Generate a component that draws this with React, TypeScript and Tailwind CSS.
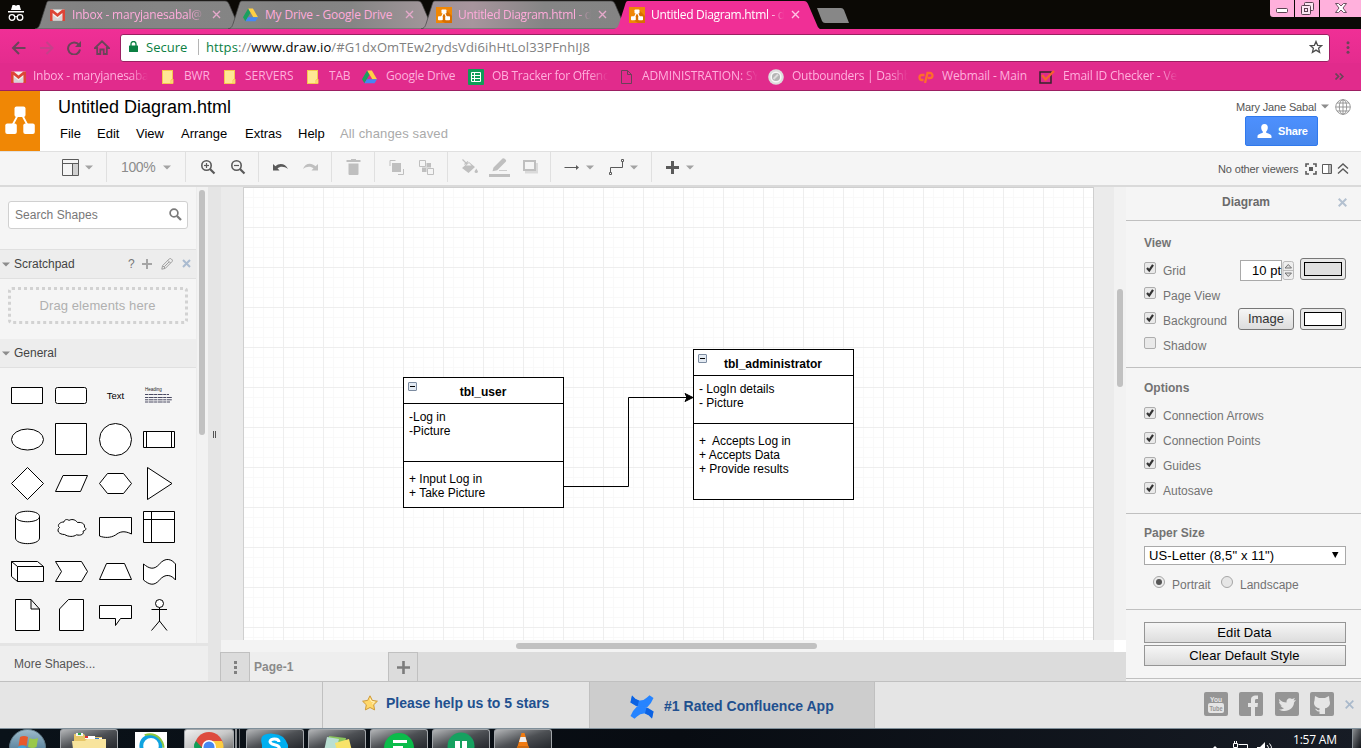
import React from "react";

const UI = "font-['Open_Sans','Noto_Sans',sans-serif]";

/* ---------- shared bits ---------- */

const Caret = ({ className = "" }: { className?: string }) => (
  <svg className={"shrink-0 " + className} width="9" height="5" viewBox="0 0 9 5">
    <path d="M0 0.500h8L4 4.500z" fill="currentColor" />
  </svg>
);

const Gmail = () => (
  <svg width="15" height="12" viewBox="0 0 15 12" className="shrink-0">
    <rect x="0.5" y="0.5" width="14" height="11" fill="#f2f2f2" />
    <path d="M3 11.5V6l4.5 3.4L12 6v5.500z" fill="#d8d4d6" />
    <path d="M0 0.500h2.600L7.500 4.600 12.400 0.500H15V12h-2.600V4L7.500 8 2.600 4v8H0z" fill="#dd4437" />
  </svg>
);

const Drive = () => (
  <svg width="15" height="14" viewBox="0 0 15 14" className="shrink-0">
    <path d="M5.200 0.500 0 9.300l2.400 4L7.600 4.500z" fill="#19a15f" />
    <path d="M5.200 0.500h4.700l5.100 8.800h-4.700z" fill="#ffcf44" />
    <path d="M2.400 13.300 5 9.300h10l-2.500 4z" fill="#4587f4" />
  </svg>
);

const DrawLogo = () => (
  <svg width="16" height="16" viewBox="0 0 16 16" className="shrink-0">
    <rect width="16" height="16" fill="#f08705" />
    <path d="M10 3l6 6v7H9l-5-3z" fill="#d86f00" />
    <path d="M8 5 5 11M8 5l3 6" stroke="#fff" strokeWidth="1.200" />
    <rect x="5.500" y="2.500" width="5" height="4" rx="0.800" fill="#fff" />
    <rect x="2" y="9.200" width="4.800" height="4" rx="0.800" fill="#fff" />
    <rect x="9.200" y="9.200" width="4.800" height="4" rx="0.800" fill="#fff" />
  </svg>
);

const FolderIcon = () => (
  <svg width="13" height="14" viewBox="0 0 13 14" className="shrink-0">
    <rect x="0.500" y="0.500" width="10" height="13" fill="#ffe694" stroke="#f5c84e" />
    <path d="M11 9v4.500H9V10z" fill="#ffe694" stroke="#f5c84e" />
  </svg>
);

/* ---------- browser window ---------- */

const fade = "[mask-image:linear-gradient(to_right,#000_84%,transparent)]";

function Tab({ icon, text, active = false, blur = "", textClass }: { icon: React.ReactNode; text: string; active?: boolean; blur?: string; textClass: string }) {
  return (
    <div className={"relative -ml-[13px] h-[29px] w-[206px] shrink-0 " + (active ? "z-10" : "")}>
      <svg className="absolute inset-0" width="206" height="29" viewBox="0 0 206 29">
        <defs>
          <linearGradient id={"tabfill" + blur}>
            <stop offset="0" stopColor={blur === "b" ? "#9b9195" : "#868686"} />
            <stop offset="0.250" stopColor={blur === "b" ? "#a7959d" : "#828282"} />
            <stop offset="0.600" stopColor="#858585" />
            <stop offset="1" stopColor={blur === "a" ? "#a3979b" : "#848484"} />
          </linearGradient>
        </defs>
        <path
          d="M0 29C4 28 4 26 5 24L11 5C12 2 12 1 14 1H190C192 1 193 2 194 4L203 25C204 28 205 28 206 29Z"
          fill={active ? "#f02f96" : `url(#tabfill${blur})`}
          stroke={active ? "none" : "#444"}
          strokeWidth="0.700"
        />
      </svg>
      <div className="relative flex h-full items-center pl-[15px]">
        <div className="flex w-[22px]">{icon}</div>
        <div className={"w-[133px] overflow-hidden text-[12px] leading-[16px] whitespace-nowrap " + textClass}>{text}</div>
        <svg className="ml-[7px]" width="9" height="9" viewBox="0 0 9 9">
          <path d="M1 1l7 7M8 1L1 8" stroke={active ? "#ffc4e4" : "#e5a9cb"} strokeWidth="1.400" />
        </svg>
      </div>
    </div>
  );
}

function TabStrip() {
  return (
    <div className="flex h-[29px] bg-[#0b0905]">
      <div className="flex w-[48px] shrink-0 pt-[5px] pl-[8px]">
        <svg width="16" height="17" viewBox="0 0 16 17" fill="none">
          <path d="M4.500 0h2l1.500.7L9.500 0h2l1.500 5H3zM0 6h16v1.500H0z" fill="#fff" />
          <circle cx="4" cy="12.500" r="2.800" stroke="#fff" strokeWidth="1.300" />
          <circle cx="12" cy="12.500" r="2.800" stroke="#fff" strokeWidth="1.300" />
          <path d="M6.500 12q1.500-1 3 0" stroke="#fff" />
        </svg>
      </div>
      <Tab icon={<Gmail />} text="Inbox - maryjanesabal@" blur="n" textClass="text-[#ffabdb] tracking-[-0.2px] [mask-image:linear-gradient(to_right,#000_88%,transparent)]" />
      <Tab icon={<Drive />} text="My Drive - Google Drive" blur="a" textClass="text-[#ffabdb] tracking-[-0.18px]" />
      <Tab icon={<DrawLogo />} text="Untitled Diagram.html - d" blur="b" textClass="text-[#ffabdb] tracking-[-0.32px] [mask-image:linear-gradient(to_right,#000_88%,transparent)]" />
      <Tab icon={<DrawLogo />} text="Untitled Diagram.html - d" active textClass="text-white tracking-[-0.32px] [mask-image:linear-gradient(to_right,#000_88%,transparent)]" />
      <svg className="mt-[8px] -ml-[3px]" width="33" height="15" viewBox="0 0 33 15">
        <path d="M0 0H24Q26 0 27 2L32 15H8Q6 15 5 13Z" fill="#878787" />
      </svg>
      <div className="ml-auto flex h-[17px] gap-px">
        <div className="flex w-[24px] justify-center rounded-bl-[3px] bg-[#ffb0dc] pt-[8px]">
          <svg width="12" height="5" viewBox="0 0 12 5"><rect x="0.500" y="0.500" width="11" height="4" rx="1" fill="#fff" stroke="#5b4352" /></svg>
        </div>
        <div className="flex w-[24px] justify-center bg-[#ffb0dc] pt-[2px]">
          <svg width="13" height="13" viewBox="0 0 13 13" fill="#fbe6f2" stroke="#5b4352">
            <rect x="3.500" y="0.500" width="9" height="8" rx="1" />
            <rect x="0.500" y="3.500" width="9" height="9" rx="1" />
            <rect x="3.500" y="6.500" width="3" height="3" />
          </svg>
        </div>
        <div className="flex w-[41px] justify-center bg-[#ffb0dc] pt-[3px]">
          <svg width="12" height="10" viewBox="0 0 12 10">
            <path d="M.5.5h3L6 3 8.500.5h3L8 5l3.500 4.500h-3L6 7 3.500 9.500h-3L4 5z" fill="#fff" stroke="#5b4352" strokeWidth="0.900" />
          </svg>
        </div>
      </div>
    </div>
  );
}

function AddressBar() {
  return (
    <div className="flex h-[34px] items-center bg-linear-to-b from-[#f02f96] to-[#e42c8e] pt-[3px]">
      <svg className="ml-[11px] shrink-0" width="15" height="14" viewBox="0 0 15 14" fill="none" stroke="#6b4459" strokeWidth="2">
        <path d="M14.500 7H2M8 1 2 7l6 6" />
      </svg>
      <svg className="ml-[14px] shrink-0" width="14" height="14" viewBox="0 0 14 14" fill="none" stroke="#c5408a" strokeWidth="2">
        <path d="M0 7h12M6.500 1l6 6-6 6" />
      </svg>
      <svg className="ml-[13px] shrink-0" width="14" height="14" viewBox="0 0 14 14" fill="none" stroke="#6b4459" strokeWidth="2">
        <path d="M12 4A6 6 0 1 0 13 8.500" /><path d="M14 0v6H8z" fill="#6b4459" stroke="none" />
      </svg>
      <svg className="ml-[13px] shrink-0" width="16" height="15" viewBox="0 0 16 15" fill="none" stroke="#6b4459" strokeWidth="1.800">
        <path d="M1 8 8 1.300 15 8h-2.200v6H9.700V9.500H6.300V14H3.200V8z" />
      </svg>
      <div className="ml-[10px] flex h-[28px] w-[1210px] shrink-0 items-center rounded-[3px] border border-[#9c1f62] bg-white pb-[2px]">
        <svg className="ml-[8px]" width="9" height="11" viewBox="0 0 9 11">
          <rect x="0" y="4.500" width="9" height="6.500" rx="0.500" fill="#0b8043" />
          <path d="M2 5V3a2.500 2.500 0 0 1 5 0v2" fill="none" stroke="#0b8043" strokeWidth="1.300" />
        </svg>
        <span className="ml-[8px] w-[42px] text-[13px] leading-[18px] text-[#0b8043]">Secure</span>
        <span className="ml-[10px] h-[16px] w-px bg-[#b5b5b5]" />
        <span className="ml-[7px] text-[13px] leading-[18px] tracking-[0.12px] whitespace-nowrap text-[#808080]">
          <span className="text-[#0b8043]">https</span>://<span className="text-black">www.draw.io</span>/#G1dxOmTEw2rydsVdi6ihHtLol33PFnhIJ8
        </span>
        <svg className="mr-[6px] ml-auto" width="14" height="14" viewBox="0 0 14 14" fill="none" stroke="#4d4d4d" strokeWidth="1.300">
          <path d="M7 1.500l1.600 3.800 4.100.3-3.100 2.700 1 4L7 10.100l-3.600 2.200 1-4L1.300 5.600l4.100-.3z" />
        </svg>
      </div>
      <svg className="ml-[16px]" width="4" height="13" viewBox="0 0 4 13" fill="#6b4459">
        <circle cx="2" cy="1.700" r="1.500" /><circle cx="2" cy="6.500" r="1.500" /><circle cx="2" cy="11.300" r="1.500" />
      </svg>
    </div>
  );
}

const bookmarks: { w: string; iw: string; tw: string; text: string; icon: React.ReactNode; faded?: boolean }[] = [
  { w: "w-[151px]", iw: "w-[22px]", tw: "w-[115px] tracking-[-0.25px]", text: "Inbox - maryjanesaba", icon: <Gmail />, faded: true },
  { w: "w-[62px]", iw: "w-[22px]", tw: "tracking-[-0.2px]", text: "BWR", icon: <FolderIcon /> },
  { w: "w-[83px]", iw: "w-[21px]", tw: "", text: "SERVERS", icon: <FolderIcon /> },
  { w: "w-[55px]", iw: "w-[22px]", tw: "tracking-[-0.2px]", text: "TAB", icon: <FolderIcon /> },
  { w: "w-[106px]", iw: "w-[24px]", tw: "tracking-[-0.22px]", text: "Google Drive", icon: <Drive /> },
  {
    w: "w-[153px]", iw: "w-[24px]", tw: "w-[116px] tracking-[-0.25px]", text: "OB Tracker for Offenc", faded: true,
    icon: (
      <svg width="16" height="16" viewBox="0 0 16 16"><rect width="16" height="16" rx="1" fill="#0f9d58" /><path d="M3.500 3.500h9v9h-9zM3.500 6.500h9M3.500 9.500h9M6.500 3.500v9" fill="none" stroke="#fff" /></svg>
    ),
  },
  {
    w: "w-[147px]", iw: "w-[21px]", tw: "w-[116px] tracking-[-0.1px]", text: "ADMINISTRATION: SY", faded: true,
    icon: (
      <svg width="11" height="14" viewBox="0 0 11 14"><path d="M.5.500h6l4 4v9H.5zM6.500.5v4h4" fill="none" stroke="#6b4058" /></svg>
    ),
  },
  {
    w: "w-[150px]", iw: "w-[24px]", tw: "w-[116px] tracking-[-0.25px]", text: "Outbounders | Dashb", faded: true,
    icon: (
      <svg width="16" height="16" viewBox="0 0 16 16"><circle cx="8" cy="8" r="7.800" fill="#ddd" /><circle cx="8" cy="8" r="4.800" fill="#b5b5b5" stroke="#f8f8f8" strokeWidth="1.500" /><path d="M5.500 10 10 5.500" stroke="#ddd" strokeWidth="2" /></svg>
    ),
  },
  {
    w: "w-[121px]", iw: "w-[24px]", tw: "tracking-[-0.15px]", text: "Webmail - Main",
    icon: (
      <svg width="16" height="12" viewBox="0 0 16 12" fill="none" stroke="#ff6c2c" strokeWidth="2.300"><path d="M6.500 4H4a2.500 2.500 0 0 0 0 5h1.500M7 12 9.500 2H12a2.500 2.500 0 0 1 0 5H9.800" /></svg>
    ),
  },
  {
    w: "w-[150px]", iw: "w-[24px]", tw: "w-[115px] tracking-[-0.2px]", text: "Email ID Checker - Ve", faded: true,
    icon: (
      <svg width="16" height="14" viewBox="0 0 16 14" fill="none"><path d="M1 2h11v11H1z" stroke="#35252b" strokeWidth="1.500" /><path d="M3 5l3.500 4.500L15 1" stroke="#f4622e" strokeWidth="2.400" /></svg>
    ),
  },
];

function BookmarksBar() {
  return (
    <div className="flex h-[28px] items-center border-b border-[#9c1f62] bg-[#e12b8c] pl-[11px]">
      {bookmarks.map((b) => (
        <div key={b.text} className={"flex shrink-0 items-center " + b.w}>
          <div className={"flex shrink-0 " + b.iw}>{b.icon}</div>
          <div className={"-mt-[2px] overflow-hidden text-[12px] leading-[16px] whitespace-nowrap text-[#ffb0dd] " + b.tw + " " + (b.faded ? fade : "")}>{b.text}</div>
        </div>
      ))}
      <svg className="mr-[17px] ml-auto" width="9" height="7" viewBox="0 0 9 7" fill="none" stroke="#6b4459" strokeWidth="1.700">
        <path d="M.5.5l3 3-3 3M4.800.5l3 3-3 3" />
      </svg>
    </div>
  );
}

/* ---------- editor header ---------- */

function Header() {
  return (
    <div className="flex h-[61px] border-b border-[#e0e0e0] bg-white">
      <div className="h-[60px] w-[40px] shrink-0 bg-[#f08705]">
        <svg width="40" height="60" viewBox="0 0 40 60">
          <path d="M20 20 11.500 36M20 20l8.500 16" stroke="#fff" strokeWidth="1.800" />
          <rect x="14.500" y="15.500" width="11" height="10.500" rx="2" fill="#fff" />
          <rect x="5.300" y="32.500" width="11.500" height="10.500" rx="2" fill="#fff" />
          <rect x="23.300" y="32.500" width="11.500" height="10.500" rx="2" fill="#fff" />
        </svg>
      </div>
      <div className="pl-[18px]">
        <div className="pt-[5px] text-[18px] leading-[22px] whitespace-nowrap text-black">Untitled Diagram.html</div>
        <div className="flex pt-[8px] pl-[2px] text-[13px] leading-[16px] whitespace-nowrap text-black">
          <span className="w-[37px]">File</span>
          <span className="w-[39px]">Edit</span>
          <span className="w-[45px]">View</span>
          <span className="w-[64px]">Arrange</span>
          <span className="w-[53px]">Extras</span>
          <span className="w-[42px]">Help</span>
          <span className="tracking-[0.15px] text-[#aaa]">All changes saved</span>
        </div>
      </div>
      <div className="ml-auto flex flex-col">
        <div className="mt-[7px] mr-[10px] flex h-[17px] items-center text-[11px] text-[#555]">
          <span className="w-[85px] pt-[2px] tracking-[-0.15px] whitespace-nowrap">Mary Jane Sabal</span>
          <Caret className="text-[#8c8c8c]" />
          <svg className="ml-[5px]" width="16" height="16" viewBox="0 0 16 16" fill="none" stroke="#8f8f8f" strokeWidth="0.900">
            <circle cx="8" cy="8" r="7.300" /><ellipse cx="8" cy="8" rx="3.700" ry="7.300" /><path d="M8 .7v14.600M.7 8h14.600M2 4h12M2 12h12" />
          </svg>
        </div>
        <div className="mt-[1px] ml-[9px] flex h-[30px] w-[73px] items-center rounded-[2px] border border-[#3079ed] bg-linear-to-b from-[#4d90fe] to-[#4787ed] pl-[11px]">
          <svg width="15" height="14" viewBox="0 0 15 14" fill="#fff">
            <path d="M7.500 0C10 0 11 1.800 10.800 4 10.600 6 9.800 7 9.200 7.600v1.200c1.500.8 4.800 1.300 5.300 3.200V14H.5v-2c.5-1.900 3.800-2.400 5.300-3.200V7.600C5.200 7 4.400 6 4.200 4 4 1.800 5 0 7.500 0z" />
          </svg>
          <span className="ml-[6px] text-[11px] font-bold tracking-[-0.15px] text-white">Share</span>
        </div>
      </div>
    </div>
  );
}

function Group({ className, children }: { className: string; children: React.ReactNode }) {
  return <div className={"flex h-full shrink-0 items-center border-r border-[#e0e0e0] " + className}>{children}</div>;
}

const DARK = "#5a5a5a";
const PALE = "#bfbfbf";

function Toolbar() {
  return (
    <div className="flex h-[35px] items-stretch border-b-2 border-[#dadada] bg-[#f5f5f5] pb-[3px]">
      <Group className="w-[107px] pl-[62px]">
        <svg width="17" height="17" viewBox="0 0 17 17"><path d="M11 5h5v11h-5z" fill="#d0d0d0" /><path d="M.500.500h16v16H.500zM.5 4.500h16M10.500 4.500v12" fill="none" stroke={DARK} /></svg>
        <Caret className="ml-[6px] text-[#a3a3a3]" />
      </Group>
      <Group className="w-[79px] pl-[14px]">
        <span className="w-[42px] pb-px text-[14px] leading-[16px] tracking-[-0.4px] text-[#8c8c8c]">100%</span>
        <Caret className="text-[#a3a3a3]" />
      </Group>
      <Group className="w-[73px] pl-[14px]">
        {[true, false].map((plus) => (
          <svg key={String(plus)} className="mr-[14px] shrink-0" width="16" height="16" viewBox="0 0 16 16" fill="none" stroke={DARK} strokeWidth="1.600">
            <circle cx="6.500" cy="6.500" r="4.700" /><path d="M10 10l4.500 4.500" strokeWidth="2.200" /><path d="M4 6.500h5" strokeWidth="1.200" />
            {plus && <path d="M6.500 4v5" strokeWidth="1.200" />}
          </svg>
        ))}
      </Group>
      <Group className="w-[73px] pl-[14px]">
        <svg width="15" height="8" viewBox="0 0 15 8" fill={DARK}><path d="M0 1v6.500h6.500L4.500 5.300C7 3 11.500 3 15 6 13 1 6.500-.8 2.500 3.200z" /></svg>
        <svg className="ml-[15px]" width="15" height="8" viewBox="0 0 15 8" fill={PALE}><path d="M15 1v6.500H8.500l2-2.200C8 3 3.500 3 0 6 2-.1 8.500-.8 12.500 3.200z" /></svg>
      </Group>
      <Group className="w-[43px] pl-[14px]">
        <svg width="15" height="16" viewBox="0 0 15 16" fill={PALE}><path d="M5 0h5v1h4.500v2H.5V1H5zM2.500 4.500h10V15a1 1 0 0 1-1 1h-8a1 1 0 0 1-1-1z" /></svg>
      </Group>
      <Group className="w-[73px] pl-[14px]">
        <svg width="15" height="15" viewBox="0 0 15 15" fill="none" stroke={PALE}><path d="M3 3h9v9H3z" fill={PALE} stroke="none" /><path d="M1 6V.5h5.500M9 14.500h5.500V9" /></svg>
        <svg className="ml-[15px]" width="15" height="15" viewBox="0 0 15 15" fill="none" stroke={PALE}><path d="M7.500 3H12v4.500H7.500zM3 7.500h4.500V12H3z" fill={PALE} stroke="none" /><path d="M.5.500h6v6h-6zM8.500 8.500h6v6h-6z" /></svg>
      </Group>
      <Group className="w-[103px] pl-[13px]">
        <svg width="17" height="16" viewBox="0 0 17 16" fill={PALE}><path d="M1 9l7-6 6 5-6.500 6zM13.500 13a2 2 0 0 0 3.500 0c0-1-1.700-3.500-1.700-3.500S13.500 12 13.500 13z" /><path d="M1.500.5l8 8M3.500 5.500 7 2.500" stroke={PALE} strokeWidth="1.200" /><path d="M5 6.500l3-2.500 2.500 2.500z" fill="#f5f5f5" /></svg>
        <svg className="ml-[11px]" width="22" height="19" viewBox="0 0 22 19" fill={PALE}><path d="M4.500 9.500l9-9q1-.8 2.200.2l1 1q.9 1 0 2l-8.500 8.500-4.700 1zM10 12h8v.700h-8zM0 16h21v3H0z" /></svg>
        <svg className="ml-[12px]" width="16" height="14" viewBox="0 0 16 14"><path d="M2 3h13v10.500H2z" fill="#dadada" /><path d="M1 1h11v9H1z" fill="#f5f5f5" stroke={PALE} strokeWidth="2" /></svg>
      </Group>
      <Group className="w-[101px] pl-[13px]">
        <svg width="16" height="7" viewBox="0 0 16 7"><path d="M.5 3.500H14" stroke={DARK} /><path d="M12 1l3 2.500-3 2.500z" fill={DARK} /></svg>
        <Caret className="ml-[6px] text-[#a3a3a3]" />
        <svg className="ml-[13px]" width="16" height="16" viewBox="0 0 16 16" fill="none" stroke={DARK}><path d="M2.500 13V8.500h12V3" /><path d="M1.500 13.500h2v2h-2zM13.500.500h2v2h-2z" fill="#fff" /></svg>
        <Caret className="ml-[6px] text-[#a3a3a3]" />
      </Group>
      <div className="flex items-center pl-[14px]">
        <svg width="13" height="13" viewBox="0 0 13 13"><path d="M6.500 0v13M0 6.500h13" stroke={DARK} strokeWidth="3" /></svg>
        <Caret className="ml-[7px] text-[#a3a3a3]" />
      </div>
      <div className="mr-[12px] ml-auto flex items-center pt-[3px] text-[11px] text-[#555]">
        <span className="w-[87px] pt-[2px] tracking-[-0.14px] whitespace-nowrap">No other viewers</span>
        <svg width="12" height="12" viewBox="0 0 12 12" fill="none" stroke={DARK} strokeWidth="1.600"><path d="M1 4V1h3M8 1h3v3M11 8v3H8M4 11H1V8" /><path d="M4 4h4v4H4z" fill={DARK} stroke="none" /></svg>
        <svg className="ml-[5px]" width="10" height="10" viewBox="0 0 10 10"><path d="M.5.500h9v9h-9z" fill="#fff" stroke={DARK} /><path d="M6 1h3v8H6z" fill="#b8b8b8" /><path d="M6.500 1v8" stroke="#888" /></svg>
        <svg className="ml-[5px]" width="12" height="11" viewBox="0 0 12 11" fill="none" stroke={DARK} strokeWidth="1.400"><path d="M1 5.500l5-4.500 5 4.500M1 10.500 6 6l5 4.500" /></svg>
      </div>
    </div>
  );
}

/* ---------- shape sidebar ---------- */

const shapes: React.ReactNode[] = [
  <path d="M6.500 14.500h31v16h-31z" />,
  <rect x="6.500" y="14.500" width="31" height="16" rx="2" />,
  <text x="22.500" y="26" textAnchor="middle" fontSize="9.500" fill="#000" stroke="none">Text</text>,
  <g stroke="none" fill="#222"><text x="8" y="18" fontSize="4.500">Heading</text><path d="M8 21.500h24M8 24.500h27M8 26.800h27M8 29h25" stroke="#4a4a62" strokeWidth="1" strokeDasharray="3 .6 5 .5" /></g>,
  <ellipse cx="22.500" cy="22.500" rx="16" ry="10.500" />,
  <path d="M6.500 6.500h31v31h-31z" />,
  <circle cx="22.500" cy="22.500" r="16" />,
  <path d="M6.500 14.500h31v16h-31zM9.500 14.500v16M34.500 14.500v16" />,
  <path d="M22.500 6.500l16 16-16 16-16-16z" />,
  <path d="M14 14.500h24.500l-7 16h-25z" />,
  <path d="M14.500 12.500h16l8 10-8 10h-16l-8-10z" />,
  <path d="M10.500 6.500l24.500 16-24.500 16z" />,
  <path d="M10.500 11.500v21.500c0 7.500 24 7.500 24 0V11.500c0-7-24-7-24 0c0 7 24 7 24 0" />,
  <path d="M15 17C10 17 8 21 10.500 22.500 7 25.500 10 29.500 15.500 29.500c4 2.500 9 2.500 12 .3 4 1.200 8-.8 6.500-3.600 3.500-1 3.500-3 1.500-4 .5-3.700-3-5.200-7-4.700C26 14 22 14 20 15.500 18 13.500 15 15 15 17z" />,
  <path d="M6.500 12.500h32V29c-8-4-12-2-16 1-5 3-11 3-16 1z" />,
  <path d="M6.500 6.500h31v31h-31zM6.500 14.500h31M14.500 6.500v31" />,
  <path d="M6.500 12.500h26l6 5v15h-26l-6-5zl6 5v15M12.500 17.500h26" />,
  <path d="M6.500 12.500h26l6 10-6 10h-26l6-10z" />,
  <path d="M13.500 14.500h18l7 16h-32z" />,
  <path d="M6.500 15c5 4 10 7 16 0 6-7 12-5 16 0v16c-4-5-10-7-16 0-6 7-11 4-16 0z" />,
  <path d="M10.500 6.500h15.500l8.500 9.500v21.500h-24zM26 6.500v9.500h8.500" />,
  <path d="M19.500 6.500h15v31h-24V16z" />,
  <path d="M6.500 12.500h32v13H27.500l-5 7v-7h-16z" />,
  <g><circle cx="22.500" cy="10.500" r="4" /><path d="M22.500 14.500v14M14.500 16.500h15.500M22.500 28l-8 9.500M22.500 28l7.500 9.500" /></g>,
];

function Sidebar() {
  return (
    <div className="flex w-[208px] shrink-0 flex-col bg-[#f5f5f5]">
      <div className="flex h-[459px] shrink-0 border-b-[3px] border-[#e4e4e4]">
        <div className="w-[196px] shrink-0 text-[12px] text-[#444]">
          <div className="mt-[14px] ml-[8px] flex h-[28px] w-[180px] items-center justify-between rounded-[3px] border border-[#d0d0d0] bg-white pr-[5px] pl-[6px]">
            <span className="tracking-[0.05px] text-[#777]">Search Shapes</span>
            <svg className="-mt-[2px]" width="13" height="13" viewBox="0 0 13 13" fill="none" stroke="#7a7a7a" strokeWidth="1.700"><circle cx="5" cy="5" r="3.900" /><path d="M8 8l4 4" strokeWidth="2.300" /></svg>
          </div>
          <div className="mt-[20px] flex h-[30px] items-center border-y border-[#e0e0e0] bg-[#ededed] pl-[2px]">
            <Caret className="text-[#8c8c8c]" />
            <span className="ml-[3px]">Scratchpad</span>
            <div className="mr-[5px] ml-auto flex items-center text-[#777]">
              <span className="w-[14px]">?</span>
              <svg width="10" height="10" viewBox="0 0 10 10"><path d="M5 0v10M0 5h10" stroke="#a5a5a5" strokeWidth="2" /></svg>
              <svg className="ml-[9px]" width="12" height="12" viewBox="0 0 12 12" fill="none" stroke="#949494" strokeWidth="0.900"><path d="M.8 11.200l.8-3.600L8.500.7q1-.5 1.800.3l.8.800q.7.900 0 1.700L4.300 10.400zM2 8l2 2M7 2.500 9.500 5M3.200 8.800 8 4" /></svg>
              <svg className="-mt-px ml-[9px]" width="9" height="9" viewBox="0 0 9 9"><path d="M1 1l7 7M8 1L1 8" stroke="#aabbd0" strokeWidth="2" /></svg>
            </div>
          </div>
          <div className="mt-[8px] ml-[8px] flex h-[37px] w-[180px] items-center justify-center rounded-[4px] border-[3px] border-dotted border-[#d2d2d2] pr-px text-[13px] tracking-[0.1px] text-[#b0b0b0]">
            Drag elements here
          </div>
          <div className="mt-[15px] flex h-[29px] items-center border-b border-[#e0e0e0] bg-[#ededed] pl-[2px]">
            <Caret className="text-[#8c8c8c]" />
            <span className="ml-[3px]">General</span>
          </div>
          <div className="grid grid-cols-[repeat(4,44px)] pt-[5px] pl-[5px]">
            {shapes.map((s, i) => (
              <svg key={i} width="44" height="44" viewBox="0 0 44 44" fill="#fff" stroke="#000" strokeWidth="1">{s}</svg>
            ))}
          </div>
        </div>
        <div className="w-[12px] border-l border-[#ececec] bg-[#f2f2f2] pt-[3px] pl-[2px]">
          <div className="h-[245px] w-[6px] rounded-full bg-[#c1c1c1]" />
        </div>
      </div>
      <div className="flex flex-1 items-center bg-[#eee] pl-[14px] text-[12px] text-[#555]">More Shapes...</div>
    </div>
  );
}

/* ---------- canvas ---------- */

const Fold = () => (
  <svg className="absolute top-[4px] left-[4px]" width="9" height="9" viewBox="0 0 9 9">
    <rect x="0.500" y="0.500" width="8" height="8" rx="0.500" fill="#e3eaf2" stroke="#7c8ba0" /><path d="M2 4.500h5" stroke="#000" />
  </svg>
);

function Canvas() {
  return (
    <div className="flex h-[453px]">
      <div className="w-[893px] shrink-0 bg-[#ebebeb] pl-[22px]">
        <div className="relative h-full w-[851px] border-x border-t border-[#cfcfcf] bg-white bg-[linear-gradient(to_right,#eeeeee_1px,transparent_1px),linear-gradient(to_bottom,#eeeeee_1px,transparent_1px),linear-gradient(to_right,#f9f9f9_1px,transparent_1px),linear-gradient(to_bottom,#f9f9f9_1px,transparent_1px)] bg-[size:40px_40px,40px_40px,10px_10px,10px_10px] bg-[position:-1px_-1px] text-[12px] leading-[14px] whitespace-pre text-black">
          <svg className="absolute top-0 left-0" width="851" height="452" viewBox="244 188 851 452" fill="none" stroke="#000">
            <path d="M563.500 486.500h65v-89h60" />
            <path d="M693 397.500l-8-4 2 4-2 4z" fill="#000" />
          </svg>
          <div className="absolute top-[189px] left-[159px] flex h-[131px] w-[161px] flex-col border border-black bg-white">
            <Fold />
            <div className="flex h-[26px] shrink-0 items-center justify-center border-b border-black pt-[3px] pr-px font-bold">tbl_user</div>
            <div className="h-[58px] shrink-0 border-b border-black pt-[6px] pl-[5px]">{"-Log in\n-Picture"}</div>
            <div className="pt-[10px] pl-[5px]">{"+ Input Log in\n+ Take Picture"}</div>
          </div>
          <div className="absolute top-[161px] left-[449px] flex h-[151px] w-[161px] flex-col border border-black bg-white">
            <Fold />
            <div className="flex h-[26px] shrink-0 items-center justify-center border-b border-black pt-[3px] pr-px font-bold">tbl_administrator</div>
            <div className="h-[48px] shrink-0 border-b border-black pt-[6px] pl-[5px]">{"- LogIn details\n- Picture"}</div>
            <div className="pt-[10px] pl-[5px]">{"+  Accepts Log in\n+ Accepts Data\n+ Provide results"}</div>
          </div>
        </div>
      </div>
      <div className="w-[12px] shrink-0 bg-[#f2f2f2] pt-[102px] pl-[3px]">
        <div className="h-[98px] w-[6px] rounded-full bg-[#c1c1c1]" />
      </div>
    </div>
  );
}

function Workspace() {
  return (
    <div className="flex w-[905px] shrink-0 flex-col">
      <Canvas />
      <div className="flex h-[12px]">
        <div className="w-[893px] bg-[#f3f3f3] pt-[3px] pl-[295px]"><div className="h-[6px] w-[301px] rounded-full bg-[#c1c1c1]" /></div>
        <div className="flex-1 bg-white" />
      </div>
      <div className="flex flex-1 bg-[#dcdcdc]">
        <div className="-ml-px flex w-[30px] items-center justify-center border-x border-t border-[#c0c0c0]">
          <svg width="3" height="13" viewBox="0 0 3 13" fill="#808080"><path d="M0 0h3v3H0zM0 5h3v3H0zM0 10h3v3H0z" /></svg>
        </div>
        <div className="flex w-[138px] items-center bg-[#eee] pl-[4px] text-[12px] font-bold text-[#8a8a8a]">Page-1</div>
        <div className="flex w-[30px] items-center justify-center border-x border-t border-[#c0c0c0]">
          <svg width="13" height="13" viewBox="0 0 13 13"><path d="M6.500 0v13M0 6.500h13" stroke="#7c7c7c" strokeWidth="2.600" /></svg>
        </div>
      </div>
    </div>
  );
}

/* ---------- format panel ---------- */

function Check({ label, on = true, children }: { label: string; on?: boolean; children?: React.ReactNode }) {
  return (
    <div className="flex h-[25px] items-center">
      <svg className="-mt-[5px] shrink-0" width="12" height="12" viewBox="0 0 12 12">
        <rect x="0.500" y="0.500" width="11" height="11" rx="1.500" fill="#e9e9e9" stroke="#adadad" />
        {on && <path d="M3 6l2.200 2.500L9 2.800" fill="none" stroke="#333" strokeWidth="2.200" />}
      </svg>
      <span className="ml-[7px] whitespace-nowrap">{label}</span>
      {children}
    </div>
  );
}

const Swatch = ({ fill }: { fill: string }) => (
  <div className="mr-[15px] mb-[3px] ml-[6px] flex h-[22px] w-[46px] items-center justify-center rounded-[3px] border border-[#777] bg-[#e9e9e9]">
    <div className={"h-[14px] w-[38px] border border-black " + fill} />
  </div>
);

function FormatPanel() {
  return (
    <div className="flex flex-1 flex-col bg-[#f5f5f5] text-[12px] leading-[20px] text-[#737373]">
      <div className="flex h-[34px] shrink-0 items-center border-b border-[#c0c0c0] pb-[3px] font-bold text-[#6a6a6a]">
        <span className="ml-[96px]">Diagram</span>
        <svg className="mr-[14px] ml-auto" width="9" height="9" viewBox="0 0 9 9"><path d="M.7.700l7.600 7.600M8.300.7L.7 8.300" stroke="#b4c1d0" strokeWidth="2" /></svg>
      </div>
      <div className="h-[147px] shrink-0 border-b border-[#c0c0c0] pt-[12px] pl-[18px]">
        <div className="mb-[5px] font-bold">View</div>
        <Check label="Grid">
          <div className="ml-auto flex items-center">
            <div className="flex h-[21px] w-[42px] items-center justify-end border border-[#a9a9a9] bg-white text-[13px] whitespace-nowrap text-black">10 pt</div>
            <svg className="shrink-0" width="12" height="19" viewBox="0 0 12 19"><rect x="1" y="0.500" width="10.500" height="18" rx="2" fill="#eee" stroke="#bbb" /><path d="M1 9.500h11" stroke="#bbb" /><path d="M3 7h6.500L6.250 3.500zM3 12h6.500l-3.250 3.500z" fill="#ddd" stroke="#666" strokeWidth="0.900" /></svg>
          </div>
          <Swatch fill="bg-[#e0e0e0]" />
        </Check>
        <Check label="Page View" />
        <Check label="Background">
          <div className="mb-[3px] ml-auto flex h-[22px] w-[56px] items-center justify-center rounded-[3px] border border-[#777] bg-linear-to-b from-[#f6f6f6] to-[#ddd] text-[13px] text-[#333]">Image</div>
          <Swatch fill="bg-white" />
        </Check>
        <Check label="Shadow" on={false} />
      </div>
      <div className="h-[146px] shrink-0 border-b border-[#c0c0c0] pt-[10px] pl-[18px]">
        <div className="mb-[5px] font-bold">Options</div>
        <Check label="Connection Arrows" />
        <Check label="Connection Points" />
        <Check label="Guides" />
        <Check label="Autosave" />
      </div>
      <div className="h-[96px] shrink-0 border-b border-[#c0c0c0] pt-[9px] pl-[18px]">
        <div className="font-bold">Paper Size</div>
        <div className="mt-[3px] flex h-[19px] w-[202px] items-center justify-between border border-[#a9a9a9] bg-white pr-[6px] pl-[4px] text-[13px] tracking-[0.13px] whitespace-nowrap text-black">
          {'US-Letter (8,5" x 11")'}
          <svg className="-mt-[2px]" width="7" height="6" viewBox="0 0 7 6"><path d="M0 0h6.500L3.250 6z" /></svg>
        </div>
        <div className="flex items-center pt-[10px] pl-[9px]">
          <svg className="-mt-[6px]" width="12" height="12" viewBox="0 0 12 12"><circle cx="6" cy="6" r="5.500" fill="#ececec" stroke="#a5a5a5" /><circle cx="6" cy="6" r="3" fill="#555" /></svg>
          <span className="ml-[7px] w-[49px]">Portrait</span>
          <svg className="-mt-[6px]" width="12" height="12" viewBox="0 0 12 12"><circle cx="6" cy="6" r="5.500" fill="#e6e6e6" stroke="#a5a5a5" /></svg>
          <span className="ml-[7px]">Landscape</span>
        </div>
      </div>
      <div className="flex h-[69px] shrink-0 flex-col gap-[2px] border-b border-[#c0c0c0] pt-[12px] pl-[18px] text-[13px] text-black">
        <div className="flex h-[21px] w-[202px] items-center justify-center border border-[#959595] bg-linear-to-b from-[#f6f6f6] to-[#ddd] pr-px tracking-[0.1px]">Edit Data</div>
        <div className="flex h-[21px] w-[202px] items-center justify-center border border-[#959595] bg-linear-to-b from-[#f6f6f6] to-[#ddd] pr-px tracking-[0.1px]">Clear Default Style</div>
      </div>
    </div>
  );
}

/* ---------- footer and taskbar ---------- */

const Social = ({ className = "", children }: { className?: string; children: React.ReactNode }) => (
  <svg className={"shrink-0 " + className} width="24" height="24" viewBox="0 0 24 24">
    <rect width="24" height="24" rx="2" fill="#959595" />
    {children}
  </svg>
);

function Footer() {
  return (
    <div className="flex h-[47px] shrink-0 border-t border-[#c0c0c0] bg-[#e5e5e5] text-[14px] font-bold whitespace-nowrap text-[#21508f]">
      <div className="w-[323px] shrink-0 border-r border-[#c0c0c0]" />
      <div className="flex w-[266px] shrink-0 items-center pb-[4px] pl-[39px]">
        <svg width="16" height="16" viewBox="0 0 16 16"><path d="M8 .8l2.300 4.600 5.100.8-3.700 3.600.9 5.100L8 12.500l-4.600 2.400.9-5.100L.6 6.200l5.100-.8z" fill="#ffd86b" stroke="#cf9a37" /><path d="M8 3.500l1.500 3 3 .5-2.300 2" fill="none" stroke="#fff3c4" /></svg>
        <span className="ml-[8px]">Please help us to 5 stars</span>
      </div>
      <div className="flex w-[286px] shrink-0 items-center border-x border-[#c0c0c0] bg-[#cdcdcd] pt-[3px] pl-[40px]">
        <svg width="24" height="24" viewBox="0 0 24 24">
          <path d="M2 .5Q5 4.500 9 5.500 13.500 6 17 2.500L19.500.2 23.500 3Q21 9 17.500 12 12 14 6 11L.5 7.500z" fill="#2684ff" />
          <path d="M2 .5Q5 4.500 9 5.500L7.500 11.500 .5 7.500z" fill="#0c62e2" />
          <path d="M22 23.500Q19 19.500 15 18.500 10.500 18 7 21.500L4.500 23.800.5 21Q3 15 6.500 12 12 10 18 13l5.500 3.500z" fill="#2684ff" />
          <path d="M22 23.500Q19 19.500 15 18.500L16.500 12.500l7 4z" fill="#0c62e2" />
        </svg>
        <span className="ml-[10px] tracking-[0.03px]">#1 Rated Confluence App</span>
      </div>
      <div className="ml-auto flex items-center pr-[7px] pb-[2px]">
        <Social><text x="12" y="9.500" fontSize="8" textAnchor="middle" textLength="12" lengthAdjust="spacingAndGlyphs" fill="#e5e5e5">You</text><rect x="4" y="11" width="16" height="10" rx="2" fill="#e5e5e5" /><text x="12" y="19" fontSize="8" textAnchor="middle" textLength="13" lengthAdjust="spacingAndGlyphs" fill="#959595">Tube</text></Social>
        <Social className="ml-[11px]"><path d="M12 24v-9H9v-4h3V8c0-3.500 2-5 7-4.500V7c-2.500 0-3 .2-3 1.500V11h3l-.5 4H16v9z" fill="#e5e5e5" /></Social>
        <Social className="ml-[12px]"><path d="M4 7c2 2.500 5 3.500 7.500 3.500C11 7 14.500 5 17 7l3-1-1.500 2.500L21 8l-2 2.500C19 17 11 21.500 4 17.500c2 0 4-.5 5-1.500-2-.3-3-1.300-3.500-2.500H7C5 12.500 4 11 4 9.500l1.500.3C4.500 9 3.500 8 4 7z" fill="#e5e5e5" /></Social>
        <Social className="ml-[11px]"><path d="M5 4l4 2h6l4-2 .5 4.500c1.500 4-.5 7-4.500 7.800V22H9.500v-2.500c-3 .5-3.500-2-4.500-2.700 2-.3 2 2 4.500 1.200v-1.700c-4.500-.8-6.500-3.800-5-7.800z" fill="#e5e5e5" /></Social>
        <svg className="ml-[11px]" width="9" height="9" viewBox="0 0 9 9"><path d="M.7.700l7.600 7.600M8.300.7L.7 8.300" stroke="#a9b9cb" strokeWidth="1.700" /></svg>
      </div>
    </div>
  );
}

function TaskButton({ className = "", children }: { className?: string; children: React.ReactNode }) {
  return (
    <div className={"mr-[4px] flex h-[20px] w-[58px] shrink-0 justify-center overflow-hidden rounded-t-[3px] border-x border-t border-[#a2a6aa] bg-linear-to-br from-[#b3b5b7] via-[#4d5054] to-[#24272c] " + className}>
      {children}
    </div>
  );
}

function Taskbar() {
  return (
    <div className={"flex h-[20px] shrink-0 overflow-hidden border-t border-[#7f8f9a] bg-linear-to-r from-[#0a1219] via-[#080c12] to-[#171c25] " + UI}>
      <div className="w-[60px] shrink-0 pl-[9px]">
        <svg width="37" height="20" viewBox="0 0 37 20">
          <defs><linearGradient id="orb" x2="0" y2="1"><stop stopColor="#9fbccb" /><stop offset="1" stopColor="#24577c" /></linearGradient></defs>
          <circle cx="18.500" cy="18.500" r="18" fill="url(#orb)" stroke="#607986" />
          <path d="M11 8q4-2 8 0l-1.500 9q-4-2-8 0z" fill="#e8592b" /><path d="M20.500 9q4 2 8.500 0l-1.500 9q-4 2-8.500 0z" fill="#9ac84a" />
          <path d="M9 18q4-2 8 0l-1 3H8z" fill="#3ea6df" /><path d="M18.500 19q4 2 8 0l-1 3h-7z" fill="#fbc94a" />
        </svg>
      </div>
      <TaskButton>
        <svg width="34" height="19" viewBox="0 0 34 19" className="shrink-0"><path d="M2 4h10l2 3h16v12H2z" fill="#e7c667" /><path d="M4 3h7v3H4z" fill="#f5f5f5" /><path d="M6 3h3v2H6z" fill="#2ca84a" /><path d="M13 6h10v3H13z" fill="#fff" /><path d="M13 6h3v2h-3z" fill="#d33" /><path d="M21 8h9v3h-9z" fill="#fff" /><path d="M23 8h4v2h-4z" fill="#2f7ad0" /><path d="M0 11h13l2-2h19v10H1z" fill="#f8e49d" /></svg>
      </TaskButton>
      <div className="mt-[3px] ml-[13px] h-[16px] w-[32px] shrink-0 bg-white">
        <svg width="32" height="16" viewBox="0 0 33 16" fill="none"><circle cx="16.500" cy="14" r="10" stroke="#0fa3e0" strokeWidth="4" /><path d="M10 3q9-3 15 3 4 4 4.500 10" stroke="#8cc63f" strokeWidth="2" /></svg>
      </div>
      <div className="ml-[17px] flex">
        <TaskButton className="mr-[1px]! w-[50px]! from-[#f0f0f0]! via-[#c8c8c8]! to-[#777]!">
          <svg width="30" height="20" viewBox="0 0 30 20" className="shrink-0"><circle cx="15" cy="16" r="14" fill="#dd4b3e" /><path d="M2 11l9 10H2q-4-5 0-10z" fill="#109d58" /><path d="M15 11h13q3 6 0 10H18z" fill="#fdcd41" /><circle cx="15" cy="17" r="7" fill="#fff" /><circle cx="15" cy="17" r="5.500" fill="#4688f1" /></svg>
        </TaskButton>
        <div className="mr-[2px] w-[2px] bg-[#8d9093]" /><div className="mr-[6px] w-[1px] bg-[#6b6e72]" />
      </div>
      <TaskButton>
        <svg width="32" height="20" viewBox="0 0 32 20" className="shrink-0"><path d="M3 15Q0 5 8 4q4-1 7 0 10 0 14 11v5H3z" fill="#00aff0" /><path d="M20 12c0-4-9-4-9-.5 0 4.500 9.500 2 9.500 7" fill="none" stroke="#fff" strokeWidth="3" /></svg>
      </TaskButton>
      <TaskButton>
        <svg width="32" height="20" viewBox="0 0 32 20" className="shrink-0"><path d="M8 6l17 2-3 14H4z" fill="#8bc75c" /><path d="M6 7l12 2-3 12H3z" fill="#b9dfd2" /><path d="M14 13l14-4 3 12H16z" fill="#f8e36a" /></svg>
      </TaskButton>
      <TaskButton>
        <svg width="30" height="20" viewBox="0 0 30 20" className="shrink-0"><circle cx="15" cy="18" r="15" fill="#0bbc4a" /><path d="M9 10h14v3H9zM9 16h10v3H9z" fill="#fff" /></svg>
      </TaskButton>
      <TaskButton>
        <svg width="28" height="20" viewBox="0 0 28 20" className="shrink-0"><circle cx="14" cy="16" r="13.500" fill="#16a160" /><path d="M8 11h5v9H8zM15 11h5v9h-5z" fill="#fff" /></svg>
      </TaskButton>
      <TaskButton>
        <svg width="22" height="20" viewBox="0 0 22 20" className="shrink-0"><path d="M9.500 3h3l5 17H4.500z" fill="#f07b12" /><path d="M8.500 7h5l1.300 5H7z" fill="#eee" /><path d="M5.500 16h11l.8 2H4.700z" fill="#c96a14" /></svg>
      </TaskButton>
      <div className="ml-auto flex text-white">
        <svg className="mt-[16px]" width="8" height="5" viewBox="0 0 8 5"><path d="M4 1l4 4H0z" fill="#fff" /></svg>
        <svg className="mt-[12px] ml-[14px]" width="16" height="9" viewBox="0 0 16 9" fill="none" stroke="#fff"><path d="M5.500 3.500h9V9M.500 2.500h4v4h-4zM1.500 0v2M3.500 0v2M2.500 6.500V9" /></svg>
        <svg className="mt-[12px] ml-[8px]" width="16" height="9" viewBox="0 0 16 9"><path d="M0 6h3l5-5v8H0z" fill="#fff" /><path d="M10 4q2 2 1.500 5M12.500 2.500Q15 5 14.500 9" fill="none" stroke="#fff" /></svg>
        <span className="mt-[3px] ml-[20px] w-[59px] text-[12px] leading-[16px] tracking-[-0.2px] whitespace-nowrap">1:57 AM</span>
        <div className="w-[9px] border-l border-[#8b9298] bg-linear-to-br from-[#8a8d90] to-[#101318]" />
      </div>
    </div>
  );
}

export default function App() {
  return (
    <div className="flex h-[748px] w-[1361px] flex-col overflow-hidden bg-[#e5e5e5] font-['Liberation_Sans',Arial,sans-serif]">
      <div className={"shrink-0 " + UI}>
        <TabStrip />
        <AddressBar />
        <BookmarksBar />
      </div>
      <div className="shrink-0">
        <Header />
        <Toolbar />
      </div>
      <div className="flex h-[494px] shrink-0">
        <Sidebar />
        <div className="flex w-[13px] shrink-0 items-center justify-center bg-[#e5e5e5]">
          <svg width="3" height="7" viewBox="0 0 3 7"><path d="M.5 0v7M2.500 0v7" stroke="#555" /></svg>
        </div>
        <Workspace />
        <FormatPanel />
      </div>
      <Footer />
      <Taskbar />
    </div>
  );
}
